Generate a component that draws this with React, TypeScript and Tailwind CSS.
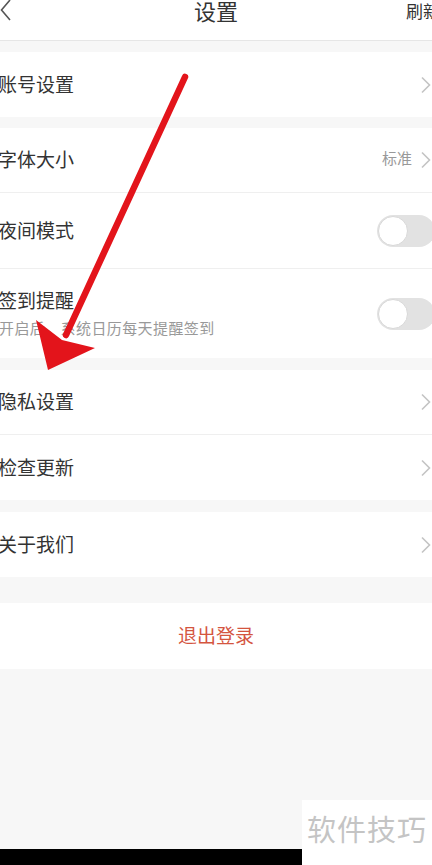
import React from "react";

const font = { fontFamily: '"Noto Sans CJK SC", "Noto Sans", sans-serif' };

function Chevron() {
  return (
    <svg width="12" height="18" viewBox="0 0 12 18" className="shrink-0">
      <path d="M2 1.5 L9.5 9 L2 16.5" fill="none" stroke="#c4c4c4" strokeWidth="1.6" />
    </svg>
  );
}

function Toggle() {
  return (
    <div className="relative w-[58px] h-[32px] rounded-full bg-[#e2e2e2] shrink-0 mr-[-3px]">
      <div className="absolute left-[1px] top-[1px] w-[30px] h-[30px] rounded-full bg-white border border-[#d8d8d8]" />
    </div>
  );
}

function Row({ label, right, h, border = true }: { label: React.ReactNode; right: React.ReactNode; h: string; border?: boolean }) {
  return (
    <div className={`flex items-center justify-between bg-white ${h} ${border ? "border-b border-[#efefef]" : ""}`}>
      <div className="text-[19px] text-[#333] leading-none ml-[-2px] mt-[-3px]">{label}</div>
      <div className="flex items-center">{right}</div>
    </div>
  );
}

export default function App() {
  return (
    <div className="relative w-[432px] h-[865px] overflow-hidden bg-[#f7f7f7]" style={font}>
      {/* header */}
      <div className="relative h-[41px] bg-white border-b border-[#e6e6e6]">
        <svg width="12" height="22" viewBox="0 0 12 22" className="absolute left-0 top-[-1px]">
          <path d="M10 1 L1.5 11 L10 21" fill="none" stroke="#555" strokeWidth="1.6" />
        </svg>
        <div className="absolute left-0 right-0 top-[-2px] text-center text-[22px] leading-[24px] text-[#333]">设置</div>
        <div className="absolute left-[406px] top-[1px] text-[17px] leading-[20px] text-[#333] whitespace-nowrap">刷新</div>
      </div>

      <div className="h-[11px]" />
      <Row label="账号设置" h="h-[65px]" border={false} right={<Chevron />} />
      <div className="h-[11px]" />
      <Row
        label="字体大小"
        h="h-[65px]"
        right={
          <>
            <span className="text-[15px] text-[#999] mr-[8px] mt-[-3px]">标准</span>
            <Chevron />
          </>
        }
      />
      <Row label="夜间模式" h="h-[76px]" right={<Toggle />} />
      <div className="flex items-center justify-between bg-white h-[89px]">
        <div className="ml-[-2px] mt-[-2px]">
          <div className="text-[19px] text-[#333] leading-none">签到提醒</div>
          <div className="text-[15px] text-[#999] leading-none mt-[11px] ml-[1px] tracking-[0.4px]">开启后，系统日历每天提醒签到</div>
        </div>
        <Toggle />
      </div>
      <div className="h-[12px]" />
      <Row label="隐私设置" h="h-[65px]" right={<Chevron />} />
      <Row label="检查更新" h="h-[65px]" border={false} right={<Chevron />} />
      <div className="h-[12px]" />
      <Row label="关于我们" h="h-[65px]" border={false} right={<Chevron />} />
      <div className="h-[26px]" />
      <div className="flex items-center justify-center bg-white h-[66px] text-[19px] text-[#d4553f]">
        <span className="mt-[-2px]">退出登录</span>
      </div>

      {/* red arrow annotation */}
      <svg className="absolute left-0 top-0 pointer-events-none" width="432" height="400" viewBox="0 0 432 400">
        <line x1="185" y1="77" x2="66" y2="335" stroke="#e3141b" strokeWidth="6.5" strokeLinecap="round" />
        <polygon points="48,370 36,320 62,340 95,348" fill="#e3141b" />
      </svg>

      {/* bottom overlays */}
      <div className="absolute left-0 bottom-0 w-[302px] h-[16px] bg-black" />
      <div className="absolute right-0 bottom-0 w-[130px] h-[65px] bg-white flex items-center justify-center">
        <span className="text-[29px] text-[#c4c4c4] leading-none tracking-[1px] mb-[8px]">软件技巧</span>
      </div>
    </div>
  );
}
